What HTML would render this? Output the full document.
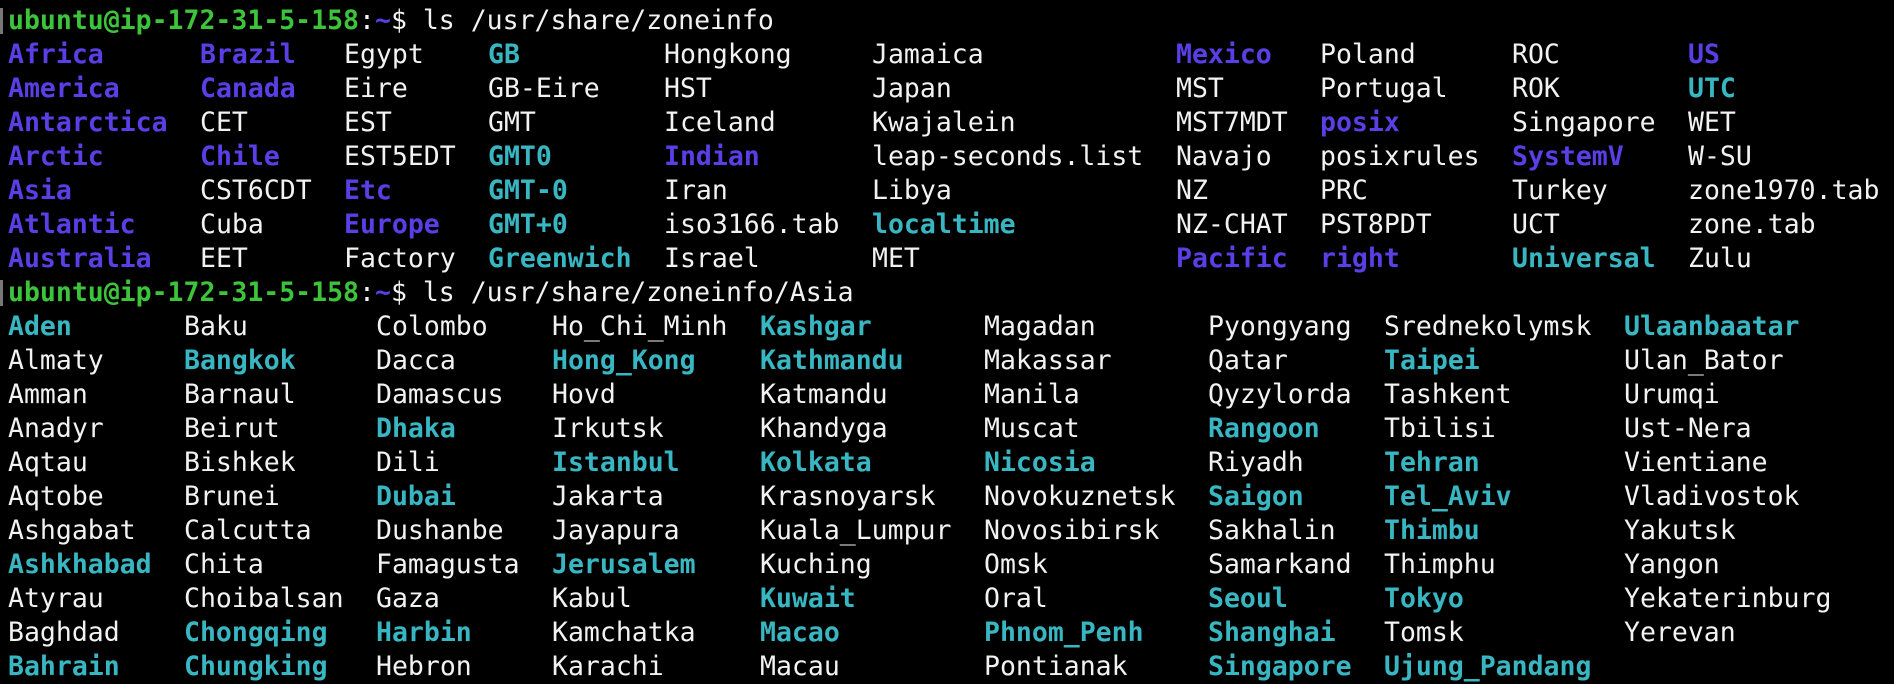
<!DOCTYPE html>
<html><head><meta charset="utf-8"><style>
html,body{margin:0;padding:0;background:#000;width:1894px;height:684px;overflow:hidden}
body{position:relative;font-family:"DejaVu Sans Mono","Liberation Mono",monospace;font-size:26.5px;color:#f2f2f2}
.r{position:absolute;left:8px;height:34px;line-height:34px;width:1880px;white-space:pre}
.r span{position:absolute;top:0}
.d{color:#5a3fe6;font-weight:bold}
.c{color:#38b7c3;font-weight:bold}
.g{color:#3cc43a;font-weight:bold}
.t{color:#5a3fe6;font-weight:bold}
.br{position:absolute;left:0;width:3px;background:#777}
</style></head><body>
<div class="br" style="top:8px;height:26px"></div>
<div class="br" style="top:280px;height:26px"></div>
<div class="r" style="top:3.5px"><span style="left:0"><b class="g">ubuntu@ip-172-31-5-158</b>:<b class="t">~</b>$ ls /usr/share/zoneinfo</span></div>
<div class="r" style="top:37.5px"><span class="d" style="left:0">Africa</span><span class="d" style="left:192px">Brazil</span><span style="left:336px">Egypt</span><span class="c" style="left:480px">GB</span><span style="left:656px">Hongkong</span><span style="left:864px">Jamaica</span><span class="d" style="left:1168px">Mexico</span><span style="left:1312px">Poland</span><span style="left:1504px">ROC</span><span class="d" style="left:1680px">US</span></div>
<div class="r" style="top:71.5px"><span class="d" style="left:0">America</span><span class="d" style="left:192px">Canada</span><span style="left:336px">Eire</span><span style="left:480px">GB-Eire</span><span style="left:656px">HST</span><span style="left:864px">Japan</span><span style="left:1168px">MST</span><span style="left:1312px">Portugal</span><span style="left:1504px">ROK</span><span class="c" style="left:1680px">UTC</span></div>
<div class="r" style="top:105.5px"><span class="d" style="left:0">Antarctica</span><span style="left:192px">CET</span><span style="left:336px">EST</span><span style="left:480px">GMT</span><span style="left:656px">Iceland</span><span style="left:864px">Kwajalein</span><span style="left:1168px">MST7MDT</span><span class="d" style="left:1312px">posix</span><span style="left:1504px">Singapore</span><span style="left:1680px">WET</span></div>
<div class="r" style="top:139.5px"><span class="d" style="left:0">Arctic</span><span class="d" style="left:192px">Chile</span><span style="left:336px">EST5EDT</span><span class="c" style="left:480px">GMT0</span><span class="d" style="left:656px">Indian</span><span style="left:864px">leap-seconds.list</span><span style="left:1168px">Navajo</span><span style="left:1312px">posixrules</span><span class="d" style="left:1504px">SystemV</span><span style="left:1680px">W-SU</span></div>
<div class="r" style="top:173.5px"><span class="d" style="left:0">Asia</span><span style="left:192px">CST6CDT</span><span class="d" style="left:336px">Etc</span><span class="c" style="left:480px">GMT-0</span><span style="left:656px">Iran</span><span style="left:864px">Libya</span><span style="left:1168px">NZ</span><span style="left:1312px">PRC</span><span style="left:1504px">Turkey</span><span style="left:1680px">zone1970.tab</span></div>
<div class="r" style="top:207.5px"><span class="d" style="left:0">Atlantic</span><span style="left:192px">Cuba</span><span class="d" style="left:336px">Europe</span><span class="c" style="left:480px">GMT+0</span><span style="left:656px">iso3166.tab</span><span class="c" style="left:864px">localtime</span><span style="left:1168px">NZ-CHAT</span><span style="left:1312px">PST8PDT</span><span style="left:1504px">UCT</span><span style="left:1680px">zone.tab</span></div>
<div class="r" style="top:241.5px"><span class="d" style="left:0">Australia</span><span style="left:192px">EET</span><span style="left:336px">Factory</span><span class="c" style="left:480px">Greenwich</span><span style="left:656px">Israel</span><span style="left:864px">MET</span><span class="d" style="left:1168px">Pacific</span><span class="d" style="left:1312px">right</span><span class="c" style="left:1504px">Universal</span><span style="left:1680px">Zulu</span></div>
<div class="r" style="top:275.5px"><span style="left:0"><b class="g">ubuntu@ip-172-31-5-158</b>:<b class="t">~</b>$ ls /usr/share/zoneinfo/Asia</span></div>
<div class="r" style="top:309.5px"><span class="c" style="left:0">Aden</span><span style="left:176px">Baku</span><span style="left:368px">Colombo</span><span style="left:544px">Ho_Chi_Minh</span><span class="c" style="left:752px">Kashgar</span><span style="left:976px">Magadan</span><span style="left:1200px">Pyongyang</span><span style="left:1376px">Srednekolymsk</span><span class="c" style="left:1616px">Ulaanbaatar</span></div>
<div class="r" style="top:343.5px"><span style="left:0">Almaty</span><span class="c" style="left:176px">Bangkok</span><span style="left:368px">Dacca</span><span class="c" style="left:544px">Hong_Kong</span><span class="c" style="left:752px">Kathmandu</span><span style="left:976px">Makassar</span><span style="left:1200px">Qatar</span><span class="c" style="left:1376px">Taipei</span><span style="left:1616px">Ulan_Bator</span></div>
<div class="r" style="top:377.5px"><span style="left:0">Amman</span><span style="left:176px">Barnaul</span><span style="left:368px">Damascus</span><span style="left:544px">Hovd</span><span style="left:752px">Katmandu</span><span style="left:976px">Manila</span><span style="left:1200px">Qyzylorda</span><span style="left:1376px">Tashkent</span><span style="left:1616px">Urumqi</span></div>
<div class="r" style="top:411.5px"><span style="left:0">Anadyr</span><span style="left:176px">Beirut</span><span class="c" style="left:368px">Dhaka</span><span style="left:544px">Irkutsk</span><span style="left:752px">Khandyga</span><span style="left:976px">Muscat</span><span class="c" style="left:1200px">Rangoon</span><span style="left:1376px">Tbilisi</span><span style="left:1616px">Ust-Nera</span></div>
<div class="r" style="top:445.5px"><span style="left:0">Aqtau</span><span style="left:176px">Bishkek</span><span style="left:368px">Dili</span><span class="c" style="left:544px">Istanbul</span><span class="c" style="left:752px">Kolkata</span><span class="c" style="left:976px">Nicosia</span><span style="left:1200px">Riyadh</span><span class="c" style="left:1376px">Tehran</span><span style="left:1616px">Vientiane</span></div>
<div class="r" style="top:479.5px"><span style="left:0">Aqtobe</span><span style="left:176px">Brunei</span><span class="c" style="left:368px">Dubai</span><span style="left:544px">Jakarta</span><span style="left:752px">Krasnoyarsk</span><span style="left:976px">Novokuznetsk</span><span class="c" style="left:1200px">Saigon</span><span class="c" style="left:1376px">Tel_Aviv</span><span style="left:1616px">Vladivostok</span></div>
<div class="r" style="top:513.5px"><span style="left:0">Ashgabat</span><span style="left:176px">Calcutta</span><span style="left:368px">Dushanbe</span><span style="left:544px">Jayapura</span><span style="left:752px">Kuala_Lumpur</span><span style="left:976px">Novosibirsk</span><span style="left:1200px">Sakhalin</span><span class="c" style="left:1376px">Thimbu</span><span style="left:1616px">Yakutsk</span></div>
<div class="r" style="top:547.5px"><span class="c" style="left:0">Ashkhabad</span><span style="left:176px">Chita</span><span style="left:368px">Famagusta</span><span class="c" style="left:544px">Jerusalem</span><span style="left:752px">Kuching</span><span style="left:976px">Omsk</span><span style="left:1200px">Samarkand</span><span style="left:1376px">Thimphu</span><span style="left:1616px">Yangon</span></div>
<div class="r" style="top:581.5px"><span style="left:0">Atyrau</span><span style="left:176px">Choibalsan</span><span style="left:368px">Gaza</span><span style="left:544px">Kabul</span><span class="c" style="left:752px">Kuwait</span><span style="left:976px">Oral</span><span class="c" style="left:1200px">Seoul</span><span class="c" style="left:1376px">Tokyo</span><span style="left:1616px">Yekaterinburg</span></div>
<div class="r" style="top:615.5px"><span style="left:0">Baghdad</span><span class="c" style="left:176px">Chongqing</span><span class="c" style="left:368px">Harbin</span><span style="left:544px">Kamchatka</span><span class="c" style="left:752px">Macao</span><span class="c" style="left:976px">Phnom_Penh</span><span class="c" style="left:1200px">Shanghai</span><span style="left:1376px">Tomsk</span><span style="left:1616px">Yerevan</span></div>
<div class="r" style="top:649.5px"><span class="c" style="left:0">Bahrain</span><span class="c" style="left:176px">Chungking</span><span style="left:368px">Hebron</span><span style="left:544px">Karachi</span><span style="left:752px">Macau</span><span style="left:976px">Pontianak</span><span class="c" style="left:1200px">Singapore</span><span class="c" style="left:1376px">Ujung_Pandang</span></div>
</body></html>
